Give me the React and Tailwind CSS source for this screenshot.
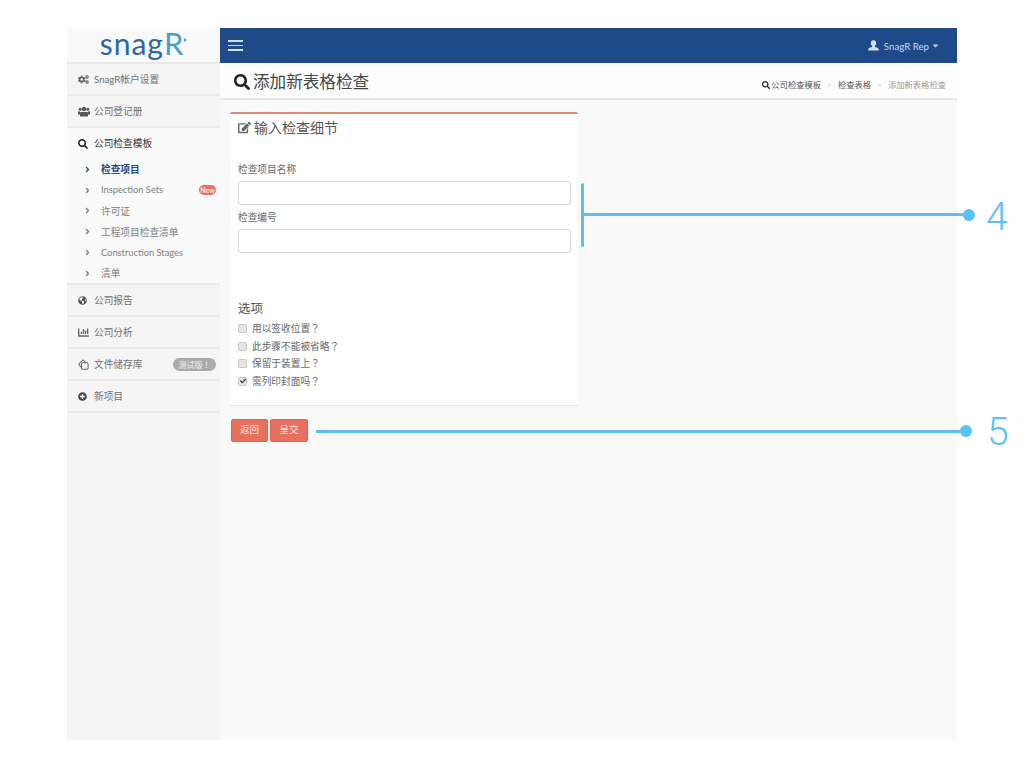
import React from "react";
import { FaCogs, FaSearch, FaGlobeAmericas, FaChartBar, FaPlusCircle, FaEdit, FaAngleRight, FaCheck, FaCaretDown } from "react-icons/fa";

const font = { fontFamily: 'Lato, "Noto Sans CJK SC", sans-serif' };
const tc = { fontFamily: '"Noto Sans CJK TC", sans-serif' };

function FilesIcon() {
  return (
    <svg width="11" height="11" viewBox="0 0 12 12" fill="none" stroke="#666" strokeWidth="1.1">
      <path d="M5.6 1 L1.2 5 a1 1 0 0 0 0 1.4 L3.4 9" />
      <rect x="3.8" y="4" width="7.2" height="7.2" rx="1.4" />
      <path d="M5.6 1 L8.4 4" />
    </svg>
  );
}

function UsersIcon() {
  return (
    <svg width="12" height="11" viewBox="0 0 12 11" fill="#555">
      <circle cx="6" cy="3" r="2.2" />
      <circle cx="2.2" cy="3.2" r="1.5" />
      <circle cx="9.8" cy="3.2" r="1.5" />
      <path d="M3 6 h6 a1 1 0 0 1 1 1 v3.5 H2 V7 a1 1 0 0 1 1-1z" />
      <path d="M0 5.6 h2 v3 H0z M10 5.6 h2 v3 h-2z" />
    </svg>
  );
}

function UserGlyph() {
  return (
    <svg width="11" height="11" viewBox="0 0 11 11" fill="#d5e0ee">
      <path d="M5.5 0.3 c1.7 0 2.7 1.2 2.7 2.8 c0 1.4-.8 2.6-1.4 3 v.9 c1.4.4 3.7 1 4 2.2 V10.4 H.2 V9.2 c.3-1.2 2.6-1.8 4-2.2 v-.9 c-.6-.4-1.4-1.6-1.4-3 c0-1.6 1-2.8 2.7-2.8z" />
    </svg>
  );
}

function MainRow({ icon, label, badge }) {
  return (
    <div className="flex items-center h-8 pl-[11px] pr-1 pt-[1px] border-b-2 border-[#e9e9e9] text-[9.7px] text-[#707070] bg-[#f5f5f5]">
      <span className="w-4 flex justify-start items-center">{icon}</span>
      <span>{label}</span>
      {badge}
    </div>
  );
}

function SubRow({ label, active, badge, latin }) {
  return (
    <div className={`flex items-center h-[20.8px] pl-[17px] pr-1 pb-[2px] ${latin ? "text-[9.3px]" : "text-[9.7px]"} ${active ? "text-[#1f4a8a] font-bold" : "text-[#808080]"}`}>
      <FaAngleRight className="w-[7px] h-[9px]" />
      <span className="ml-[10px]">{label}</span>
      {badge}
    </div>
  );
}

function Check({ label, checked }) {
  return (
    <div className="flex items-center h-[17.5px] text-[9.7px] text-[#666]">
      <span className="w-[9px] h-[9px] rounded-[2px] border border-[#c8c8c8] bg-[#e6e6e6] flex items-center justify-center">
        {checked && <FaCheck className="w-[6px] h-[6px] text-[#333]" />}
      </span>
      <span className="ml-[5px]">{label}<span style={tc}>？</span></span>
    </div>
  );
}

export default function App() {
  return (
    <div className="relative w-[1024px] h-[768px] bg-white overflow-hidden pt-[28px] pl-[67px]" style={font}>
      <div className="flex w-[890px] h-[712px]">
        <aside className="w-[153px] bg-[#f5f5f5] flex flex-col">
          <div className="h-[36px] border-b-2 border-[#e9e9e9] bg-[#f9f9f9] flex items-center justify-center pb-[3px]">
            <span className="text-[30px] leading-none text-[#2a68a8] tracking-[1px]">snag<span className="text-[#4a9fc9] text-[31px]">R</span></span>
            <span className="w-0 h-0 border-y-[2px] border-y-transparent border-l-[3px] border-l-[#4a9fc9] -mt-2" />
          </div>
          <MainRow icon={<FaCogs className="w-[11px] h-[11px] text-[#666]" />} label="SnagR帐户设置" />
          <MainRow icon={<UsersIcon />} label="公司登记册" />
          <div className="bg-[#fafafa] border-b-2 border-[#e9e9e9] h-[157px]">
            <div className="flex items-center h-8 pl-[11px] pb-[1px] text-[9.7px] text-[#333]">
              <span className="w-4 flex items-center"><FaSearch className="w-[10px] h-[10px] text-[#222]" /></span>
              <span>公司检查模板</span>
            </div>
            <SubRow label="检查项目" active />
            <SubRow latin label="Inspection Sets" badge={<span className="ml-auto w-[17px] h-[10px] rounded-full bg-[#e8705f] text-[#fde6e2] text-[7px] leading-[10px] text-center font-bold">New</span>} />
            <SubRow label="许可证" />
            <SubRow label="工程项目检查清单" />
            <SubRow latin label="Construction Stages" />
            <SubRow label="清单" />
          </div>
          <MainRow icon={<FaGlobeAmericas className="w-[9px] h-[9px] text-[#555]" />} label="公司报告" />
          <MainRow icon={<FaChartBar className="w-[11px] h-[11px] text-[#666]" />} label="公司分析" />
          <MainRow icon={<FilesIcon />} label="文件储存库" badge={<span className="ml-auto w-[43px] h-[13px] rounded-full bg-[#aaaaaa] text-[#f2f2f2] text-[8px] leading-[13px] text-center">测试版<span style={tc}>！</span></span>} />
          <MainRow icon={<FaPlusCircle className="w-[9px] h-[9px] text-[#444]" />} label="新项目" />
        </aside>
        <main className="flex-1 flex flex-col bg-[#f9f9f9]">
          <header className="h-[35px] bg-[#1f4a8a] flex items-center justify-between pl-[8px] pr-[17px]">
            <div className="flex flex-col gap-[3px]">
              <span className="block w-[15px] h-[1.5px] bg-[#d5e0ee]" />
              <span className="block w-[15px] h-[1.5px] bg-[#d5e0ee]" />
              <span className="block w-[15px] h-[1.5px] bg-[#d5e0ee]" />
            </div>
            <div className="flex items-center text-[#c9d6e8] text-[9.7px] pt-[1px]">
              <UserGlyph />
              <span className="ml-[5px]">SnagR Rep</span>
              <FaCaretDown className="ml-[2px] w-[9px] h-[9px]" />
            </div>
          </header>
          <div className="h-[37px] bg-[#fdfdfd] border-b-2 border-[#e8e8e8] flex justify-between pl-[14px] pr-[11px]">
            <div className="flex items-center text-[16.6px] text-[#444] pt-[3px]">
              <FaSearch className="w-[16px] h-[16px] text-[#222]" />
              <span className="ml-[3px]">添加新表格检查</span>
            </div>
            <div className="flex items-center text-[8.3px] text-[#555] pt-[9px]">
              <FaSearch className="w-[8px] h-[8px] text-[#222]" />
              <span className="ml-[1px]">公司检查模板</span>
              <span className="mx-[6px] text-[#ccc]">&gt;</span>
              <span>检查表格</span>
              <span className="mx-[6px] text-[#ccc]">&gt;</span>
              <span className="text-[#999]">添加新表格检查</span>
            </div>
          </div>
          <div className="pl-[10px] pt-[12px]">
            <section className="w-[348px] h-[293px] bg-white rounded-[2px] border-t-2 border-[#e08a7a] shadow-[0_1px_1px_rgba(0,0,0,0.08)] px-[8px] flex flex-col">
              <div className="flex items-center h-[26px] text-[14px] text-[#555]">
                <FaEdit className="w-[13px] h-[13px] text-[#666]" />
                <span className="ml-[3px]">输入检查细节</span>
              </div>
              <label className="mt-[19px] h-[21px] block text-[9.7px] leading-[20px] text-[#666]">检查项目名称</label>
              <div className="mt-[1px] w-[333px] h-[24px] rounded-[3px] border border-[#d5d5d5] bg-white" />
              <label className="mt-[2px] h-[22px] block text-[9.7px] leading-[20px] text-[#666]">检查编号</label>
              <div className="w-[333px] h-[24px] rounded-[3px] border border-[#d5d5d5] bg-white" />
              <h3 className="mt-[46px] text-[12.5px] leading-[20px] text-[#555]">选项</h3>
              <div className="mt-[1px]">
                <Check label="用以签收位置" />
                <Check label="此步骤不能被省略" />
                <Check label="保留于装置上" />
                <Check label="需列印封面吗" checked />
              </div>
            </section>
            <div className="mt-[14px] ml-[1px] flex gap-[2px]">
              <button className="w-[37px] h-[23px] rounded-[2px] bg-[#e8705f] border border-[#dc6454] text-[#fde6e2] text-[9.5px]">返回</button>
              <button className="w-[38px] h-[23px] rounded-[2px] bg-[#e8705f] border border-[#dc6454] text-[#fde6e2] text-[9.5px]">呈交</button>
            </div>
          </div>
        </main>
      </div>

      <div className="absolute left-[581px] top-[183px] w-[3px] h-[64px] rounded-sm bg-[#5bc0f8]" />
      <div className="absolute left-[584px] top-[213px] w-[384px] h-[3px] bg-[#5bc0f8]" />
      <div className="absolute left-[963px] top-[209px] w-[12px] h-[12px] rounded-full bg-[#5bc0f8]" />
      <div className="absolute left-[986px] top-[195px] text-[39px] leading-[44px] font-light text-[#5bc0f8]" style={{ fontFamily: 'Roboto, sans-serif' }}>4</div>
      <div className="absolute left-[316px] top-[430px] w-[650px] h-[3px] bg-[#5bc0f8]" />
      <div className="absolute left-[960px] top-[425px] w-[12px] h-[12px] rounded-full bg-[#5bc0f8]" />
      <div className="absolute left-[987px] top-[410px] text-[39px] leading-[44px] font-light text-[#5bc0f8]" style={{ fontFamily: 'Roboto, sans-serif' }}>5</div>
    </div>
  );
}
